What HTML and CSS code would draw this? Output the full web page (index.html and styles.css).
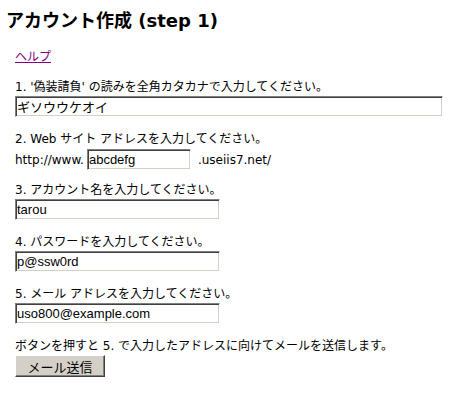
FILE: index.html
```html
<!DOCTYPE html>
<html lang="ja">
<head>
<meta charset="utf-8">
<title>アカウント作成 (step 1)</title>
<link rel="stylesheet" href="styles.css">
</head>
<body>
<h1 class="title">アカウント作成 (step 1)</h1>
<div class="content">
  <p class="help"><a href="#" class="help-link">ヘルプ</a></p>
  <div class="field">
    <div class="label">1. '偽装請負' の読みを全角カタカナで入力してください。</div>
    <input class="text wide" type="text" value="ギソウウケオイ">
  </div>
  <div class="field">
    <div class="label">2. Web サイト アドレスを入力してください。</div>
    <div class="url-row">
      <span>http://www.</span><input class="text short" type="text" value="abcdefg"><span class="suffix">.useiis7.net/</span>
    </div>
  </div>
  <div class="field after-url">
    <div class="label">3. アカウント名を入力してください。</div>
    <input class="text mid" type="text" value="tarou">
  </div>
  <div class="field">
    <div class="label">4. パスワードを入力してください。</div>
    <input class="text mid" type="text" value="p@ssw0rd">
  </div>
  <div class="field">
    <div class="label">5. メール アドレスを入力してください。</div>
    <input class="text mid" type="text" value="uso800@example.com">
  </div>
  <div class="field last">
    <div class="label">ボタンを押すと 5. で入力したアドレスに向けてメールを送信します。</div>
    <button class="send" type="button">メール送信</button>
  </div>
</div>
</body>
</html>
```
FILE: styles.css
```css
html, body {
  margin: 0;
  padding: 0;
  background: #fff;
}
body {
  font-family: "DejaVu Sans", "Noto Sans CJK JP", sans-serif;
  font-size: 12px;
  color: #000;
  width: 460px;
  height: 405px;
  overflow: hidden;
}
.title {
  margin: 10px 6px 0 6px;
  font-size: 18px;
  line-height: 22px;
  font-weight: bold;
  font-family: "DejaVu Sans", "Noto Sans CJK JP", sans-serif;
}
.content {
  padding: 0 0 0 15px;
}
.help {
  margin: 17px 0 0 0;
  line-height: 16px;
}
.help-link {
  color: #800080;
  text-decoration: underline;
}
.field {
  margin-top: 14px;
}
.field.after-url {
  margin-top: 12px;
}
.label {
  line-height: 16px;
  height: 16px;
  margin-bottom: 1px;
}
.text {
  display: block;
  box-sizing: border-box;
  height: 21px;
  margin: 0;
  padding: 0 2px 0 1px;
  font-family: "Liberation Sans", "Noto Sans CJK JP", sans-serif;
  font-size: 13px;
  color: #000;
  background: #fff;
  border-style: solid;
  border-width: 1px;
  border-color: #808080 #fff #fff #808080;
  box-shadow: inset 1px 1px 0 #404040, inset -1px -1px 0 #d4d0c8;
  outline: none;
}
.wide { width: 428px; }
.mid { width: 205px; }
.short {
  display: inline-block;
  width: 104px;
  margin-left: 3px;
  vertical-align: middle;
}
.url-row {
  display: flex;
  align-items: center;
  height: 21px;
  margin-top: 2px;
}
.suffix {
  margin-left: 7px;
}
.send {
  display: block;
  box-sizing: border-box;
  width: 90px;
  height: 22px;
  margin: 1px 0 0 0;
  padding: 0;
  font-family: "Noto Sans CJK JP", sans-serif;
  font-size: 13px;
  color: #000;
  background: #d4d0c8;
  border-style: solid;
  border-width: 1px;
  border-color: #fff #404040 #404040 #fff;
  box-shadow: inset -1px -1px 0 #808080;
  border-radius: 0;
}
```
